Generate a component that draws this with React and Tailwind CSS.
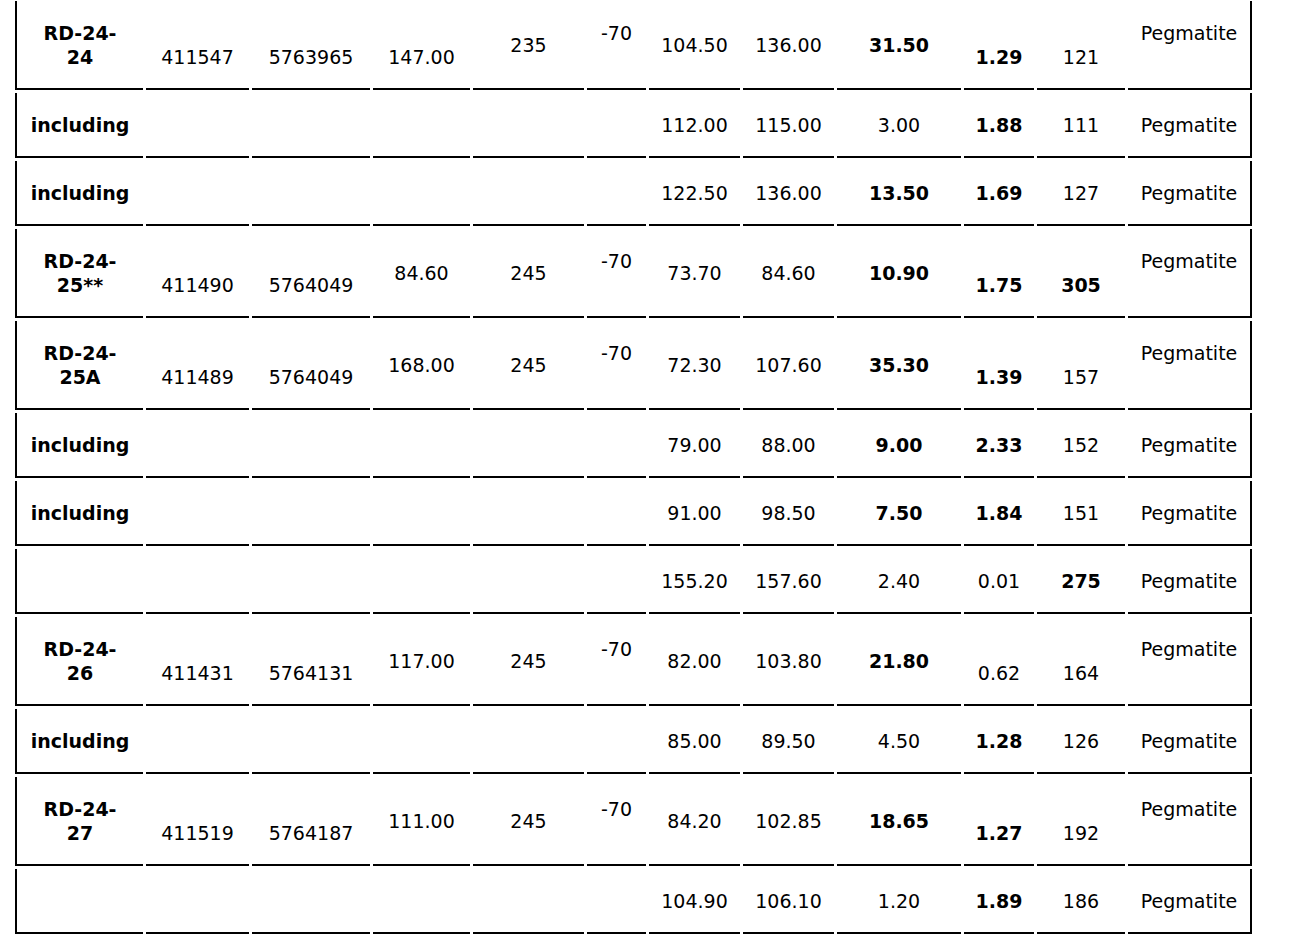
import React from 'react';

const ALIGN = { t: 'justify-start', m: 'justify-center', b: 'justify-end' };

const blank = ['', '', '', '', ''];

// [text, vertical align, bold]
const rows = [
  {
    id: ['RD-24-', '24'],
    cells: [['411547', 'b'], ['5763965', 'b'], ['147.00', 'b'], ['235', 'm'], ['-70', 't'], ['104.50', 'm'], ['136.00', 'm'], ['31.50', 'm', 1], ['1.29', 'b', 1], ['121', 'b'], ['Pegmatite', 't']],
  },
  { id: ['including'], cells: [...blank, '112.00', '115.00', '3.00', ['1.88', 'm', 1], '111', 'Pegmatite'] },
  { id: ['including'], cells: [...blank, '122.50', '136.00', ['13.50', 'm', 1], ['1.69', 'm', 1], '127', 'Pegmatite'] },
  {
    id: ['RD-24-', '25**'],
    cells: [['411490', 'b'], ['5764049', 'b'], ['84.60', 'm'], ['245', 'm'], ['-70', 't'], ['73.70', 'm'], ['84.60', 'm'], ['10.90', 'm', 1], ['1.75', 'b', 1], ['305', 'b', 1], ['Pegmatite', 't']],
  },
  {
    id: ['RD-24-', '25A'],
    cells: [['411489', 'b'], ['5764049', 'b'], ['168.00', 'm'], ['245', 'm'], ['-70', 't'], ['72.30', 'm'], ['107.60', 'm'], ['35.30', 'm', 1], ['1.39', 'b', 1], ['157', 'b'], ['Pegmatite', 't']],
  },
  { id: ['including'], cells: [...blank, '79.00', '88.00', ['9.00', 'm', 1], ['2.33', 'm', 1], '152', 'Pegmatite'] },
  { id: ['including'], cells: [...blank, '91.00', '98.50', ['7.50', 'm', 1], ['1.84', 'm', 1], '151', 'Pegmatite'] },
  { id: [''], cells: [...blank, '155.20', '157.60', '2.40', '0.01', ['275', 'm', 1], 'Pegmatite'] },
  {
    id: ['RD-24-', '26'],
    cells: [['411431', 'b'], ['5764131', 'b'], ['117.00', 'm'], ['245', 'm'], ['-70', 't'], ['82.00', 'm'], ['103.80', 'm'], ['21.80', 'm', 1], ['0.62', 'b'], ['164', 'b'], ['Pegmatite', 't']],
  },
  { id: ['including'], cells: [...blank, '85.00', '89.50', '4.50', ['1.28', 'm', 1], '126', 'Pegmatite'] },
  {
    id: ['RD-24-', '27'],
    cells: [['411519', 'b'], ['5764187', 'b'], ['111.00', 'm'], ['245', 'm'], ['-70', 't'], ['84.20', 'm'], ['102.85', 'm'], ['18.65', 'm', 1], ['1.27', 'b', 1], ['192', 'b'], ['Pegmatite', 't']],
  },
  { id: [''], cells: [...blank, '104.90', '106.10', '1.20', ['1.89', 'm', 1], '186', 'Pegmatite'] },
];

function Cell({ cell, last }) {
  const [text, align, bold] = Array.isArray(cell) ? cell : [cell, 'm', 0];
  return (
    <div
      className={`flex flex-col ${ALIGN[align]} text-center border-b-2 border-black pt-5 pb-[19px] ${
        bold ? 'font-bold' : ''
      } ${last ? 'border-r-2' : ''}`}
    >
      <span>{text}</span>
    </div>
  );
}

export default function App() {
  return (
    <div className="min-h-screen bg-white text-black pt-px pl-[15px] font-['DejaVu_Sans',Verdana,sans-serif] text-[19px] leading-6">
      <div className="grid w-[1237px] grid-cols-[128px_103px_118px_97px_111px_59px_91px_91px_124px_70px_88px_124px] gap-[3px]">
        {rows.map((row, r) => (
          <React.Fragment key={r}>
            <div className="flex flex-col justify-center text-center font-bold border-l-2 border-b-2 border-black pt-5 pb-[19px]">
              {row.id.map((line, i) => (
                <span key={i} className="block min-h-6">
                  {line}
                </span>
              ))}
            </div>
            {row.cells.map((cell, c) => (
              <Cell key={c} cell={cell} last={c === row.cells.length - 1} />
            ))}
          </React.Fragment>
        ))}
      </div>
    </div>
  );
}
